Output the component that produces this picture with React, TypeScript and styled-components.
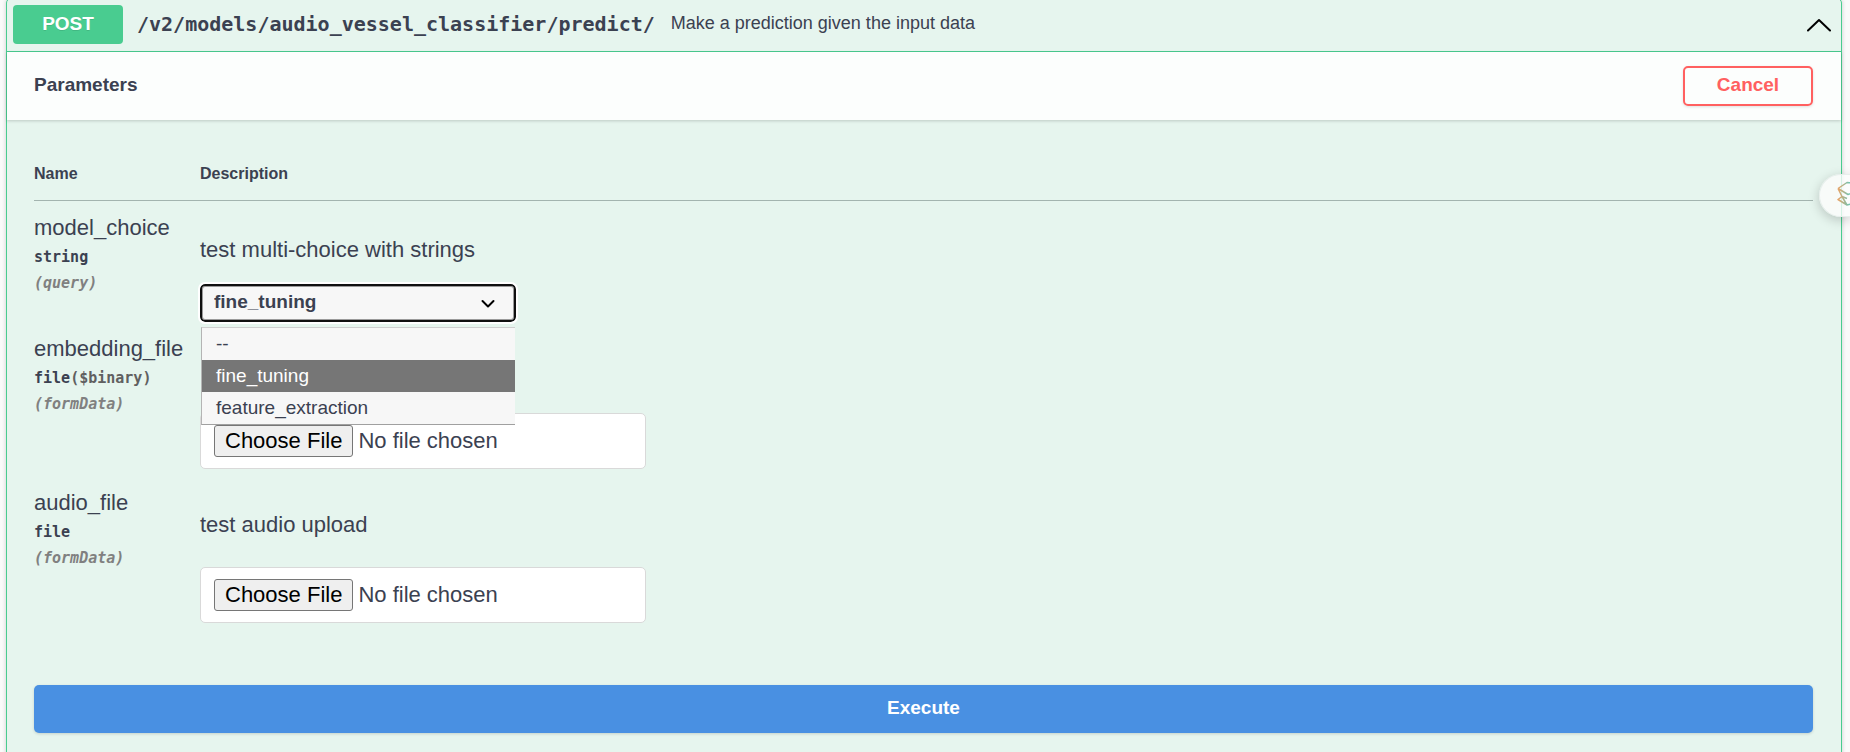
import React, { useState } from "react";
import styled, { createGlobalStyle } from "styled-components";

const sans = `"Liberation Sans", Arial, sans-serif`;
const mono = `"DejaVu Sans Mono", monospace`;
const ink = "#3b4151";

const GlobalStyle = createGlobalStyle`
  *, *::before, *::after { box-sizing: border-box; }
  body { margin: 0; background: #fafafa; color: ${ink}; font-family: ${sans}; overflow: hidden; }
`;

const Operation = styled.section`
  margin: -2px 8px 0 6px;
  border: 1px solid #49cc90;
  border-radius: 5px;
  background: #e6f5ee;
  box-shadow: 0 0 4px rgba(0, 0, 0, 0.19);
`;

const Summary = styled.header`
  display: flex;
  align-items: center;
  height: 53px;
  padding: 0 10px 1px 6px;
  border-bottom: 1px solid #49cc90;
`;

const Method = styled.span`
  width: 110px;
  padding-bottom: 2px;
  border-radius: 4px;
  background: #49cc90;
  color: #fff;
  font-size: 19px;
  font-weight: 700;
  line-height: 37px;
  text-align: center;
  text-shadow: 0 1px 0 rgba(0, 0, 0, 0.1);
`;

const Path = styled.span`
  padding: 0 16px 2px 14px;
  font-family: ${mono};
  font-size: 20px;
  font-weight: 700;
`;

const SummaryText = styled.span`
  flex: 1;
  padding-bottom: 2px;
  font-size: 18px;
`;

const Toggle = styled.button`
  display: flex;
  padding: 0;
  border: 0;
  background: none;
`;

const SectionHeader = styled.div`
  display: flex;
  align-items: center;
  justify-content: space-between;
  height: 68px;
  padding: 0 28px 0 27px;
  background: rgba(255, 255, 255, 0.85);
  box-shadow: 0 1px 3px rgba(0, 0, 0, 0.18);
`;

const Title = styled.h4`
  margin: 0;
  padding-bottom: 2px;
  font-size: 19px;
  line-height: 24px;
`;

const CancelButton = styled.button`
  width: 130px;
  height: 40px;
  padding: 0 0 2px;
  border: 2px solid #ff6060;
  border-radius: 5px;
  background: transparent;
  box-shadow: 0 1px 3px rgba(0, 0, 0, 0.12);
  color: #ff6060;
  font: 700 19px ${sans};
`;

const Body = styled.div`
  padding: 28px 28px 0 27px;
`;

const Table = styled.table`
  width: 100%;
  border-collapse: collapse;
`;

const HeadCell = styled.th<{ $narrow?: boolean }>`
  width: ${(p) => (p.$narrow ? "166px" : "auto")};
  height: 52px;
  padding: 0;
  border-bottom: 1px solid #a3b4af;
  font-size: 16px;
  text-align: left;
`;

const Cell = styled.td`
  padding: 14px 0 0;
  vertical-align: top;
`;

const ParamName = styled.div`
  font-size: 22px;
  line-height: 26px;
`;

const ParamType = styled.div`
  padding-top: 6px;
  font: 700 15px/20px ${mono};
`;

const Format = styled.span`
  color: #606060;
`;

const ParamIn = styled.div`
  padding-top: 6px;
  color: #808080;
  font: italic 700 15px/20px ${mono};
`;

const Description = styled.p`
  height: 26px;
  margin: 22px 0 21px;
  font-size: 22px;
  line-height: 26px;
`;

const SelectWrap = styled.div`
  position: relative;
  width: 316px;
`;

const Select = styled.select`
  display: block;
  width: 100%;
  height: 38px;
  padding: 0 12px 2px;
  appearance: none;
  border: 2px solid #101010;
  border-radius: 5px;
  outline: 2px solid #fff;
  background: #f7f7f7;
  box-shadow: inset 0 0 0 1px #9a9a9a;
  color: ${ink};
  font: 700 19px ${sans};
`;

const SelectArrow = styled.svg`
  position: absolute;
  top: 15px;
  right: 21px;
  pointer-events: none;
`;

const Menu = styled.ul`
  position: absolute;
  z-index: 1;
  top: 43px;
  left: 1px;
  right: 1px;
  margin: 0;
  padding: 0;
  border: solid;
  border-width: 1px 0 1px 1px;
  border-color: #cfcfcf #a0a0a0 #a0a0a0 #b4b4b4;
  background: #f7f7f7;
  list-style: none;
`;

const MenuItem = styled.li<{ $active: boolean }>`
  padding: 0 14px;
  background: ${(p) => (p.$active ? "#767676" : "transparent")};
  color: ${(p) => (p.$active ? "#fff" : ink)};
  font-size: 19px;
  line-height: 32px;
`;

const FileInput = styled.input`
  display: block;
  width: 446px;
  height: 56px;
  margin: 29px 0 7px;
  padding: 11px 13px;
  border: 1px solid #d9d9d9;
  border-radius: 5px;
  background: #fff;
  color: ${ink};
  font: 22px ${sans};

  &::file-selector-button {
    height: 32px;
    margin: 0 5px 0 0;
    padding: 0 10px;
    border: 1px solid #767676;
    border-radius: 3px;
    background: #efefef;
    color: #000;
    font: 22px ${sans};
  }
`;

const Footer = styled.div`
  padding: 55px 28px 28px 27px;
`;

const ExecuteButton = styled.button`
  display: block;
  width: 100%;
  height: 48px;
  padding: 0 0 2px;
  border: 0;
  border-radius: 5px;
  background: #4990e2;
  box-shadow: 0 1px 3px rgba(0, 0, 0, 0.15);
  color: #fff;
  font: 700 19px ${sans};
`;

const Assistant = styled.button`
  position: fixed;
  top: 174px;
  right: 0;
  width: 31px;
  height: 43px;
  padding: 0 0 0 17px;
  overflow: hidden;
  border: 1px solid #e8efec;
  border-right: 0;
  border-radius: 22px 0 0 22px;
  background: rgba(252, 252, 252, 0.78);
  box-shadow: 0 3px 12px rgba(0, 0, 0, 0.2);
`;

const options = ["--", "fine_tuning", "feature_extraction"];

type FileRowProps = { name: string; format?: string; description?: string };

function FileRow({ name, format, description }: FileRowProps) {
  return (
    <tr>
      <Cell>
        <ParamName as="label" htmlFor={name}>{name}</ParamName>
        <ParamType>file{format && <Format>({format})</Format>}</ParamType>
        <ParamIn>(formData)</ParamIn>
      </Cell>
      <Cell>
        <Description>{description}</Description>
        <FileInput id={name} type="file" />
      </Cell>
    </tr>
  );
}

export default function App() {
  const [choice, setChoice] = useState("fine_tuning");
  return (
    <>
      <GlobalStyle />
      <Operation>
        <Summary>
          <Method>POST</Method>
          <Path>/v2/models/audio_vessel_classifier/predict/</Path>
          <SummaryText>Make a prediction given the input data</SummaryText>
          <Toggle aria-label="Collapse operation">
            <svg width="24" height="14" viewBox="0 0 24 14" fill="none" stroke="#000" strokeWidth="2">
              <path d="M1 12.5 12 2l11 10.5" strokeLinecap="round" strokeLinejoin="round" />
            </svg>
          </Toggle>
        </Summary>
        <SectionHeader>
          <Title>Parameters</Title>
          <CancelButton>Cancel</CancelButton>
        </SectionHeader>
        <Body>
          <Table>
            <thead>
              <tr>
                <HeadCell $narrow>Name</HeadCell>
                <HeadCell>Description</HeadCell>
              </tr>
            </thead>
            <tbody>
              <tr>
                <Cell>
                  <ParamName as="label" htmlFor="model_choice">model_choice</ParamName>
                  <ParamType>string</ParamType>
                  <ParamIn>(query)</ParamIn>
                </Cell>
                <Cell>
                  <Description>test multi-choice with strings</Description>
                  <SelectWrap>
                    <Select id="model_choice" value={choice} onChange={(e) => setChoice(e.target.value)}>
                      {options.map((o) => <option key={o}>{o}</option>)}
                    </Select>
                    <SelectArrow width="14" height="10" viewBox="0 0 14 10" fill="none" stroke="#000" strokeWidth="2">
                      <path d="M1.5 2 7 7.5 12.5 2" strokeLinecap="round" strokeLinejoin="round" />
                    </SelectArrow>
                    <Menu role="listbox">
                      {options.map((o) => (
                        <MenuItem key={o} role="option" aria-selected={o === choice} $active={o === choice} onClick={() => setChoice(o)}>
                          {o}
                        </MenuItem>
                      ))}
                    </Menu>
                  </SelectWrap>
                </Cell>
              </tr>
              <FileRow name="embedding_file" format="$binary" />
              <FileRow name="audio_file" description="test audio upload" />
            </tbody>
          </Table>
        </Body>
        <Footer>
          <ExecuteButton>Execute</ExecuteButton>
        </Footer>
      </Operation>
      <Assistant aria-label="Open assistant">
        <svg width="26" height="26" viewBox="0 0 26 26" fill="none" stroke="url(#assistantInk)" strokeWidth="1.5" strokeLinejoin="round">
          <defs>
            <linearGradient id="assistantInk" gradientUnits="userSpaceOnUse" x1="0" y1="0" x2="14" y2="0">
              <stop offset="0" stopColor="#f2a060" />
              <stop offset="1" stopColor="#62c8bc" />
            </linearGradient>
          </defs>
          <path d="M1 7.500 10 1.500l9 1M1 7.500l10 6 8-3M1 7.500l4 8 5 8.500 9-2M5 15.500l-4 3L10 24M5 15.500l5 2" />
        </svg>
      </Assistant>
    </>
  );
}
